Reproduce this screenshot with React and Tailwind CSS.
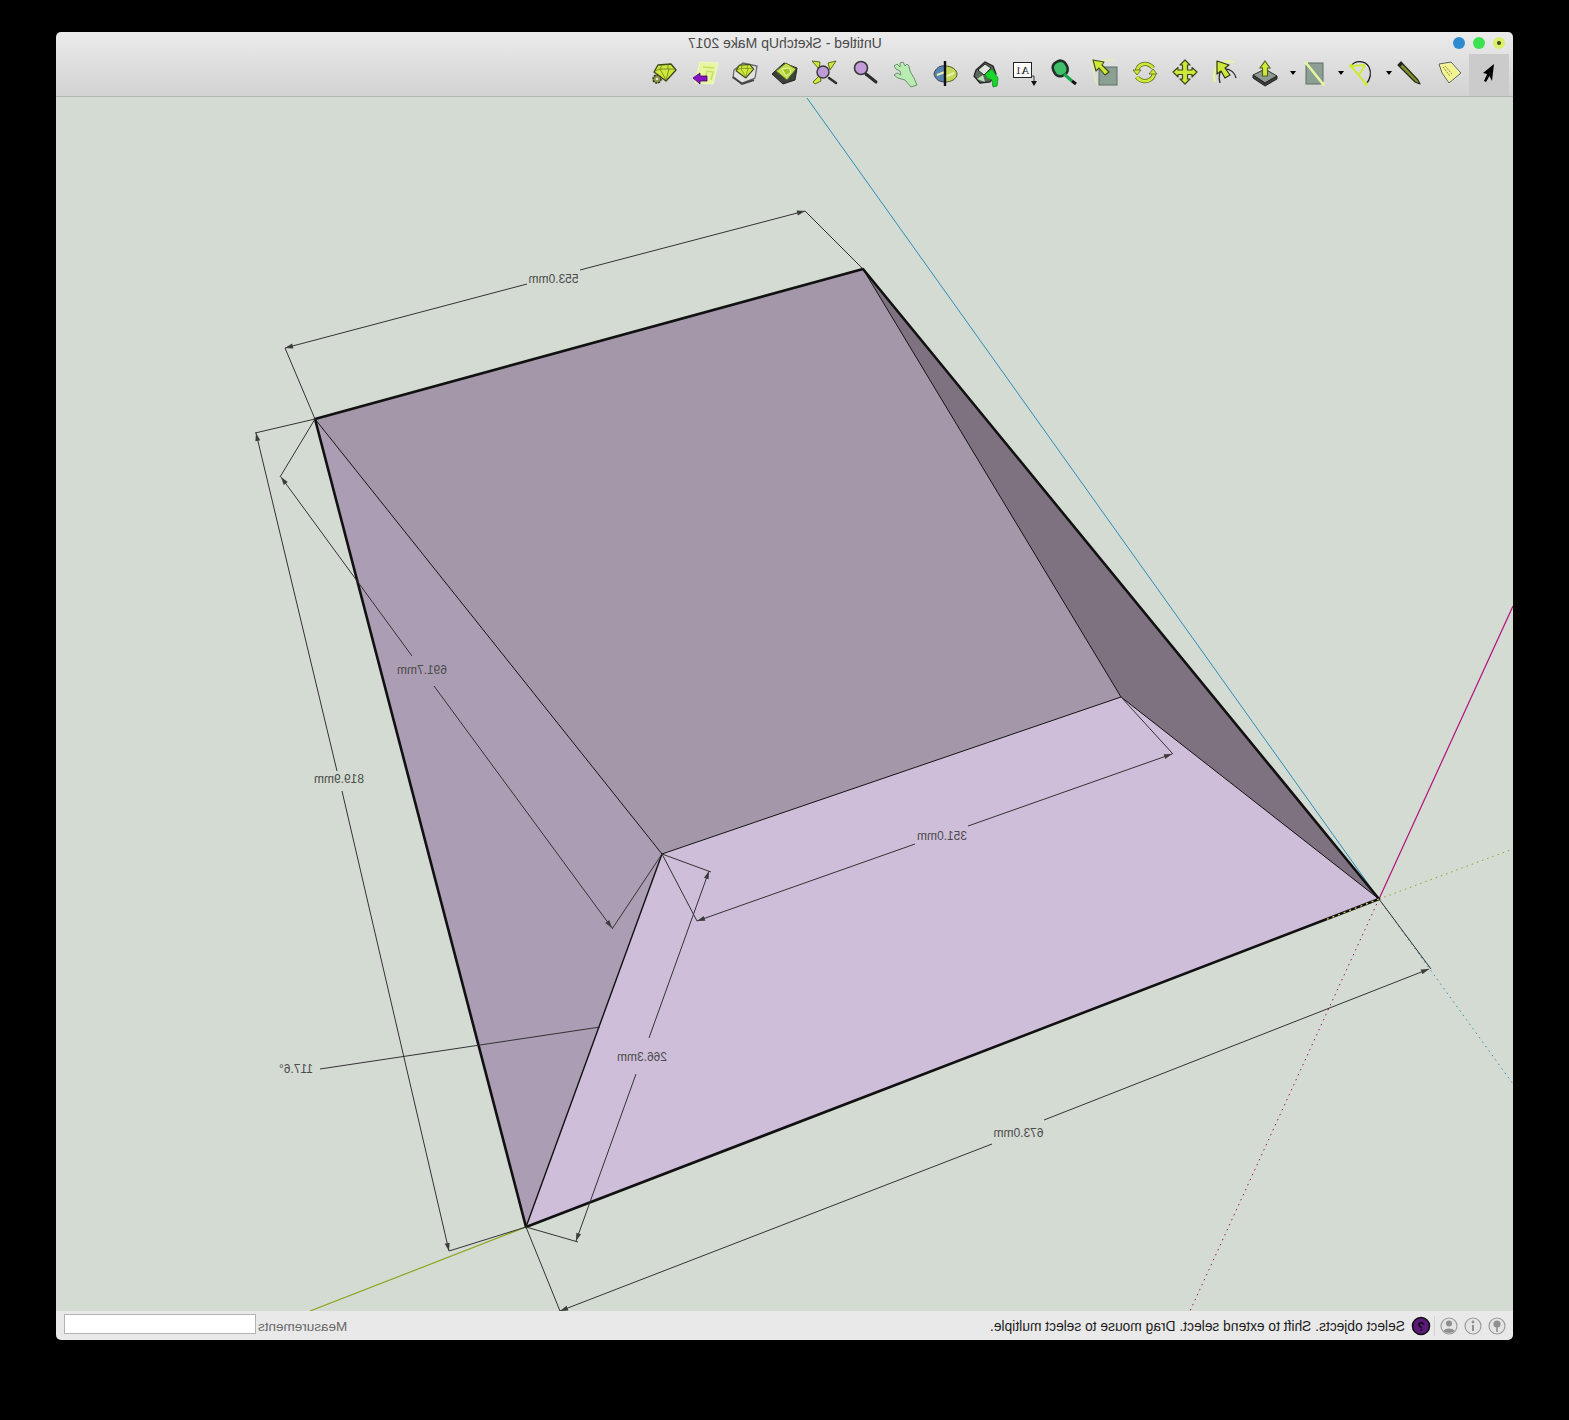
import React from "react";

const LIME = "#cfe83a";
const PALE = "#e6f5a0";
const SLATE = "#8b9f93";

function Tool({ wide, active, caret, dx = 0, children }) {
  return (
    <div className={`relative flex h-[42px] items-start pt-[2px] ${wide ? "w-12 justify-end" : "w-10 justify-center"} ${active ? "bg-[#cbcbcb]" : ""}`}>
      {caret && <span className="absolute left-[5px] top-[17px] h-0 w-0 border-x-[3.5px] border-t-[4px] border-x-transparent border-t-black" />}
      <svg width="32" height="32" viewBox={`${dx} 0 32 32`} className={wide ? "mr-1" : ""}>{children}</svg>
    </div>
  );
}

function Gem() {
  return (
    <g>
      <path d="M11 9 L24 8 L29 14 L19 25 L7 16 Z" fill={LIME} stroke="#3d4a1c" strokeWidth="1.4" strokeLinejoin="round" />
      <path d="M8 15 L13 13 L24 13 L28 13 M13 13 L19 24 M22 13 L19 24 M13 13 L15 9 M21 13 L21 8" fill="none" stroke="#6a7a22" strokeWidth="0.8" />
    </g>
  );
}

function Icons() {
  return (
    <div className="flex h-[42px] items-end justify-end pr-1">
      <Tool dx={2}>
        <Gem />
        <circle cx="10" cy="23" r="4" fill="#8f9440" stroke="#2e2e1e" strokeWidth="1.5" strokeDasharray="2 1" />
        <circle cx="10" cy="23" r="1.3" fill="#e5e5e0" />
      </Tool>
      <Tool dx={1}>
        <path d="M12 6 L30 7 L25 28 L7 27 Z" fill={PALE} stroke="#f0fac0" strokeWidth="1" />
        <path d="M15 11 L26 12 M19 15 L25 16 L23 24 M19 15 L17 24" fill="none" stroke="#c8df5c" strokeWidth="1.5" />
        <path d="M5 22 L12 17 V20 H19 V25 H12 V28 Z" fill="#8a12c8" stroke="#3a0a55" strokeWidth="0.8" />
      </Tool>
      <Tool dx={2}>
        <path d="M7 14 L16 7 L30 10 L28 22 L15 27 L6 22 Z" fill="#e2e2e2" stroke="#6a6a6a" strokeWidth="1.3" />
        <path d="M6 21 L15 28 L27 24" fill="none" stroke="#454545" strokeWidth="2" />
        <g transform="translate(3.5 2) scale(0.8)"><Gem /></g>
      </Tool>
      <Tool dx={2}>
        <path d="M5 18 L17 7 L30 12 L28 24 L16 28 Z" fill="#3b4238" stroke="#222" strokeWidth="1" />
        <path d="M9 15 L19 7 L29 13 L20 24 Z" fill="#c4e04c" stroke="#5a6a28" strokeWidth="1" />
        <path d="M15 13 L22 12 L24 16 L19 20 Z" fill="#a2c42a" stroke="#eef6b0" strokeWidth="1" />
      </Tool>
      <Tool dx={1}>
        <path d="M4 5 L12 6 L11 13 Z M28 5 L20 7 L22 14 Z M5 26 L12 19 L13 25 L7 28 Z" fill={LIME} stroke="#5d6b21" strokeWidth="1" />
        <path d="M21 22 L28 27" stroke="#2e2e2e" strokeWidth="2.5" strokeLinecap="round" />
        <circle cx="15" cy="16" r="6" fill="#c09ad6" stroke="#3b3b3b" strokeWidth="1.5" />
      </Tool>
      <Tool>
        <path d="M17 18 L27 26" stroke="#2c2c2c" strokeWidth="3" strokeLinecap="round" />
        <circle cx="12" cy="12" r="6.5" fill="#c39bd8" stroke="#3a3a3a" strokeWidth="1.6" />
      </Tool>
      <Tool dx={1}>
        <path d="M6 10 L9 8 L12 11 L12 7 L15 6 L17 10 L19 8 L21 10 L22 15 L26 22 L29 29 L23 31 L17 24 L10 22 L6 19 L9 17 L13 19 L12 15 L8 13 Z" fill="#b8ecb0" stroke="#6f8f6f" strokeWidth="1" strokeLinejoin="round" />
      </Tool>
      <Tool dx={1}>
        <path d="M6 18 C7 12 13 9 17 10 L17 26 C11 26 7 23 6 18 Z" fill="#5b86b0" stroke="#34404d" strokeWidth="1" />
        <path d="M17 10 C24 10 29 14 29 18 C29 23 23 26 17 26 Z" fill="#c4d85a" stroke="#4a5226" strokeWidth="1" />
        <path d="M9 19 L17 16 M17 21 L26 17" stroke="#e9f2b0" strokeWidth="2" />
        <path d="M17 5 V30" stroke="#111" strokeWidth="2.4" />
      </Tool>
      <Tool>
        <path d="M7 14 L16 6 L24 10 L27 18 L21 26 L11 27 L5 20 Z" fill="#5d665a" stroke="#232323" strokeWidth="1.3" />
        <path d="M9 14 L16 8 L22 12 L15 19 Z" fill="#dfe5dc" stroke="#232323" strokeWidth="1" />
        <path d="M8 23 L14 19 L16 26 Z" fill="#b8e0b4" />
        <path d="M16 18 L23 13 L29 22 L28 30 L24 31 L23 24 L18 22 Z" fill="#19d62b" stroke="#118a1e" strokeWidth="0.8" />
      </Tool>
      <Tool dx={1}>
        <rect x="5.5" y="6.5" width="18" height="15" fill="#fff" stroke="#222" strokeWidth="1" />
        <text transform="translate(14.5 18) scale(-1 1)" textAnchor="middle" fontFamily="'Liberation Serif', serif" fontSize="11" fill="#111">A1</text>
        <path d="M23 20 H26 V26" fill="none" stroke="#333" strokeWidth="1" />
        <path d="M23 25 H29 L26 30 Z" fill="#111" />
      </Tool>
      <Tool dx={2}>
        <rect x="6" y="5" width="14" height="15" rx="6" transform="rotate(-28 13 12)" fill="#3fbf6a" stroke="#23302a" strokeWidth="2.6" />
        <path d="M17 18 L25 25" stroke="#15a84a" strokeWidth="3" />
        <path d="M25 25 L29 28" stroke="#111" strokeWidth="3" />
      </Tool>
      <Tool>
        <path d="M3 4 C4 14 5 22 9 30 M12 4 H26" fill="none" stroke={PALE} strokeWidth="1" />
        <rect x="10" y="11" width="18" height="18" fill={SLATE} stroke="#5d6e64" strokeWidth="1" />
        <path d="M4 4 L15 6 L13 9 L20 16 L16 19 L10 12 L7 15 Z" fill={LIME} stroke="#3f4a18" strokeWidth="1.1" strokeLinejoin="round" />
      </Tool>
      <Tool>
        <path d="M8 16 C8 10 13 7 18 8 C21 9 23 10 24 12" fill="none" stroke="#59661e" strokeWidth="4.2" />
        <path d="M8 16 C8 10 13 7 18 8 C21 9 23 10 24 12" fill="none" stroke={LIME} strokeWidth="2.8" />
        <path d="M25 18 C24 23 19 26 14 25 C11 24 9 23 8 21" fill="none" stroke="#59661e" strokeWidth="4.2" />
        <path d="M25 18 C24 23 19 26 14 25 C11 24 9 23 8 21" fill="none" stroke={LIME} strokeWidth="2.8" />
        <path d="M4 14 L12 14 L8 19 Z M28 18 L20 18 L24 13 Z" fill={LIME} stroke="#59661e" strokeWidth="0.8" />
      </Tool>
      <Tool>
        <path d="M16 4 L21 9 H18.5 V14 H23 V11.5 L28 16 L23 21 V18.5 H18.5 V23 H21 L16 28 L11 23 H13.5 V18.5 H9 V21 L4 16 L9 11.5 V14 H13.5 V9 H11 Z" fill={LIME} stroke="#3e4818" strokeWidth="1.2" strokeLinejoin="round" />
      </Tool>
      <Tool dx={1}>
        <path d="M7 26 C3 13 12 3 26 6" fill="none" stroke={PALE} strokeWidth="2.2" />
        <path d="M12 27 C10 19 12 14 16 13 M17 13 C23 13 27 17 28 22" fill="none" stroke="#2b2b2b" strokeWidth="1.3" />
        <path d="M9 5 L21 9 L17 12 L22 19 L17 22 L13 15 L9 18 Z" fill={LIME} stroke="#2f3814" strokeWidth="1.2" strokeLinejoin="round" />
      </Tool>
      <Tool>
        <path d="M4 19 L16 13 L28 20 L16 27 Z" fill="#8c9a90" stroke="#333" strokeWidth="1" />
        <path d="M4 19 L16 27 L28 20 V23 L16 30 L4 22 Z" fill="#3d3f3a" stroke="#222" strokeWidth="1" />
        <path d="M16 5 L21 12 H18.5 V20 H13.5 V12 H11 Z" fill={LIME} stroke="#535f1c" strokeWidth="1.1" />
      </Tool>
      <Tool wide caret>
        <rect x="9" y="7" width="17" height="21" fill={SLATE} stroke="#5d6e64" strokeWidth="1" />
        <path d="M9 7 L26 28" stroke={PALE} strokeWidth="2.6" />
        <circle cx="9" cy="7" r="1.8" fill={PALE} />
        <circle cx="26" cy="28" r="1.8" fill={PALE} />
      </Tool>
      <Tool wide caret>
        <path d="M6 10 C10 4 20 4 24 11 C27 17 25 24 21 28" fill="none" stroke="#1b1b1b" strokeWidth="1.3" />
        <path d="M6 10 L21 28 M20 9 L6 10 M20 9 L14 19" fill="none" stroke={LIME} strokeWidth="2" />
        <circle cx="6" cy="10" r="2" fill={LIME} />
        <circle cx="21" cy="28" r="2" fill={LIME} />
      </Tool>
      <Tool wide caret>
        <path d="M5 9 L8 6 L25 24 L27 28 L22 26 Z" fill="#7c8f2a" stroke="#262a18" strokeWidth="1.2" strokeLinejoin="round" />
        <path d="M5 9 L8 6 L10 8 L7 11 Z" fill="#222" />
      </Tool>
      <Tool dx={2}>
        <path d="M8 8 L20 6 L30 17 L18 27 L11 17 Z" fill="#f3f38f" stroke="#e8ecd8" strokeWidth="2" strokeLinejoin="round" />
        <path d="M8 8 L20 6 L30 17 L18 27 L11 17 Z" fill="none" stroke="#3c3c2c" strokeWidth="0.8" strokeLinejoin="round" />
        <path d="M14 10 L21 18 M12 11 L19 20" stroke="#8e8a4a" strokeWidth="1" strokeDasharray="2 1" />
      </Tool>
      <Tool active>
        <path d="M21 8 L19 25 L16.5 20 L13 26 L11 25 L14 18 L10 17 Z" fill="#000" />
      </Tool>
    </div>
  );
}

function Label({ x, y, children }) {
  return (
    <text transform={`translate(${x} ${y}) scale(-1 1)`} textAnchor="middle" fontFamily="'Liberation Sans', sans-serif" fontSize="12" fill="#4b4b4b">
      {children}
    </text>
  );
}

function Arrow({ x, y, toX, toY }) {
  const a = (Math.atan2(y - toY, x - toX) * 180) / Math.PI;
  return <path d="M0 0 L-8 -2.5 L-8 2.5 Z" fill="#3c3c3c" transform={`translate(${x} ${y}) rotate(${a})`} />;
}

function Dim({ p, q, gap1, gap2, labelX, labelY, text }) {
  return (
    <g>
      <line x1={p[0]} y1={p[1]} x2={gap1[0]} y2={gap1[1]} stroke="#333" strokeWidth="1" />
      <line x1={gap2[0]} y1={gap2[1]} x2={q[0]} y2={q[1]} stroke="#333" strokeWidth="1" />
      <Arrow x={p[0]} y={p[1]} toX={q[0]} toY={q[1]} />
      <Arrow x={q[0]} y={q[1]} toX={p[0]} toY={p[1]} />
      <Label x={labelX} y={labelY}>{text}</Label>
    </g>
  );
}

function Scene() {
  return (
    <svg viewBox="56 96 1457 1214" width="1457" height="1214" className="block">
      <line x1="807" y1="97" x2="1379" y2="898" stroke="#2a8fb5" strokeWidth="1" />
      <line x1="1379" y1="898" x2="1513" y2="605" stroke="#b0127c" strokeWidth="1.2" />
      <line x1="526" y1="1226" x2="310" y2="1310" stroke="#8ba51e" strokeWidth="1.2" />
      <line x1="1379" y1="898" x2="1513" y2="848" stroke="#8ba51e" strokeWidth="1" strokeDasharray="1.5 4" />
      <line x1="1379" y1="898" x2="1190" y2="1310" stroke="#9a1570" strokeWidth="1" strokeDasharray="1.5 4" />
      <line x1="1379" y1="898" x2="1513" y2="1083" stroke="#2a8fb5" strokeWidth="1" strokeDasharray="1.5 4" />

      <polygon points="863,268 315,418 662,853 1121,696" fill="#a497a9" />
      <polygon points="315,418 662,853 526,1226" fill="#ab9db3" />
      <polygon points="662,853 1121,696 1379,898 526,1226" fill="#cfbeda" />
      <polygon points="863,268 1121,696 1379,898" fill="#7f7280" />

      <g stroke="#111" strokeWidth="1" fill="none">
        <line x1="315" y1="418" x2="662" y2="853" />
        <line x1="662" y1="853" x2="1121" y2="696" />
        <line x1="863" y1="268" x2="1121" y2="696" />
        <line x1="1121" y1="696" x2="1379" y2="898" />
        <line x1="662" y1="853" x2="526" y2="1226" strokeWidth="1.4" />
        <path d="M863 268 L315 418 L526 1226 L1379 898 Z" strokeWidth="2.6" strokeLinejoin="round" />
      </g>
      <line x1="1379" y1="898" x2="1325" y2="919" stroke="#d8dc5a" strokeWidth="1.2" strokeDasharray="2 4" />

      <g stroke="#333" strokeWidth="1">
        <line x1="863" y1="268" x2="805" y2="210" />
        <line x1="315" y1="418" x2="285" y2="347" />
        <line x1="315" y1="418" x2="255" y2="432" />
        <line x1="526" y1="1226" x2="449" y2="1250" />
        <line x1="315" y1="418" x2="280" y2="476" />
        <line x1="662" y1="853" x2="612" y2="928" />
        <line x1="1121" y1="696" x2="1173" y2="753" />
        <line x1="662" y1="853" x2="697" y2="920" />
        <line x1="662" y1="853" x2="711" y2="871" />
        <line x1="526" y1="1226" x2="578" y2="1241" />
        <line x1="1379" y1="898" x2="1431" y2="968" />
        <line x1="526" y1="1226" x2="560" y2="1310" />
        <line x1="600" y1="1026" x2="320" y2="1068" />
      </g>

      <Dim p={[285, 347]} q={[805, 210]} gap1={[527, 283]} gap2={[580, 269]} labelX={553.5} labelY={282} text="553.0mm" />
      <Dim p={[256, 432]} q={[449, 1250]} gap1={[337, 770]} gap2={[342, 790]} labelX={339} labelY={782} text="819.9mm" />
      <Dim p={[281, 476]} q={[612, 927]} gap1={[412, 655]} gap2={[434, 685]} labelX={422} labelY={673} text="691.7mm" />
      <Dim p={[697, 920]} q={[1172, 753]} gap1={[915, 843]} gap2={[968, 825]} labelX={942} labelY={839} text="351.0mm" />
      <Dim p={[709, 870]} q={[576, 1240]} gap1={[649, 1037]} gap2={[636, 1073]} labelX={642} labelY={1060} text="266.3mm" />
      <Dim p={[1429, 968]} q={[560, 1310]} gap1={[1044, 1119]} gap2={[992, 1143]} labelX={1018.5} labelY={1136} text="673.0mm" />
      <Label x={296} y={1072}>117.6°</Label>
    </svg>
  );
}

function StatusIcon({ children }) {
  return (
    <svg width="20" height="20" viewBox="0 0 20 20" fill="none">
      <circle cx="10" cy="10" r="8" fill="#e4e4e4" stroke="#9a9a9a" strokeWidth="1.2" />
      {children}
    </svg>
  );
}

export default function App() {
  const mirrored = "-scale-x-100 font-['Liberation_Sans',Arial,sans-serif] leading-none";
  return (
    <div className="h-[1420px] w-[1569px] bg-black pl-14 pt-8">
      <div className="flex h-[1308px] w-[1457px] flex-col overflow-hidden rounded-[5px]">
        <div className="h-[65px] border-b border-[#b4b8b2] bg-gradient-to-b from-[#ebebeb] to-[#d2d2d2]">
          <div className="grid h-[22px] grid-cols-[1fr_auto_1fr] items-center">
            <div />
            <span className={`${mirrored} text-[14px] text-[#4a4a4a]`}>Untitled - SketchUp Make 2017</span>
            <div className="flex items-center justify-end gap-2 pr-2">
              <span className="h-3 w-3 rounded-full bg-[#2e8bd0]" />
              <span className="h-3 w-3 rounded-full bg-[#3de24f]" />
              <span className="flex h-3 w-3 items-center justify-center rounded-full bg-[#d9f06a]">
                <span className="h-1 w-1 rounded-full bg-[#3a4a1a]" />
              </span>
            </div>
          </div>
          <Icons />
        </div>
        <div className="h-[1214px] overflow-hidden bg-[#d4dbd3]">
          <Scene />
        </div>
        <div className="flex h-[29px] items-center justify-between bg-[#e9e9e9] pl-2 pr-1">
          <div className="flex items-center gap-[2px]">
            <div className="mb-1 h-5 w-[192px] border border-[#b3b3b3] bg-white" />
            <span className={`${mirrored} mt-[2px] text-[13.5px] text-[#6a6a6a]`}>Measurements</span>
          </div>
          <div className="flex items-center">
            <span className={`${mirrored} mr-[6px] mt-[2px] text-[13.8px] text-[#1c1c1c]`}>Select objects. Shift to extend select. Drag mouse to select multiple.</span>
            <svg width="20" height="20" viewBox="0 0 20 20">
              <circle cx="10" cy="10" r="8.5" fill="#5c1a78" stroke="#111" strokeWidth="1.6" />
              <text transform="translate(10 14.5) scale(-1 1)" textAnchor="middle" fontFamily="'Liberation Sans', sans-serif" fontWeight="700" fontSize="12" fill="#0b0b0b">?</text>
            </svg>
            <span className="mx-[3px] h-5 w-px bg-[#d2d2d2]" />
            <span className="ml-[1px] mr-[4px]">
              <StatusIcon>
                <circle cx="10" cy="7.5" r="3" fill="#8f8f8f" />
                <path d="M4.5 15 C5 11.5 15 11.5 15.5 15 C13 17.5 7 17.5 4.5 15 Z" fill="#8f8f8f" />
              </StatusIcon>
            </span>
            <span className="mr-1">
              <StatusIcon>
                <circle cx="10" cy="6" r="1.4" fill="#8f8f8f" />
                <path d="M10 9 V15" stroke="#8f8f8f" strokeWidth="2" />
              </StatusIcon>
            </span>
            <span className="mr-[2px]">
              <StatusIcon>
                <circle cx="10" cy="8" r="3.6" fill="#8f8f8f" />
                <path d="M10 11 V16" stroke="#8f8f8f" strokeWidth="1.6" />
              </StatusIcon>
            </span>
          </div>
        </div>
      </div>
    </div>
  );
}
